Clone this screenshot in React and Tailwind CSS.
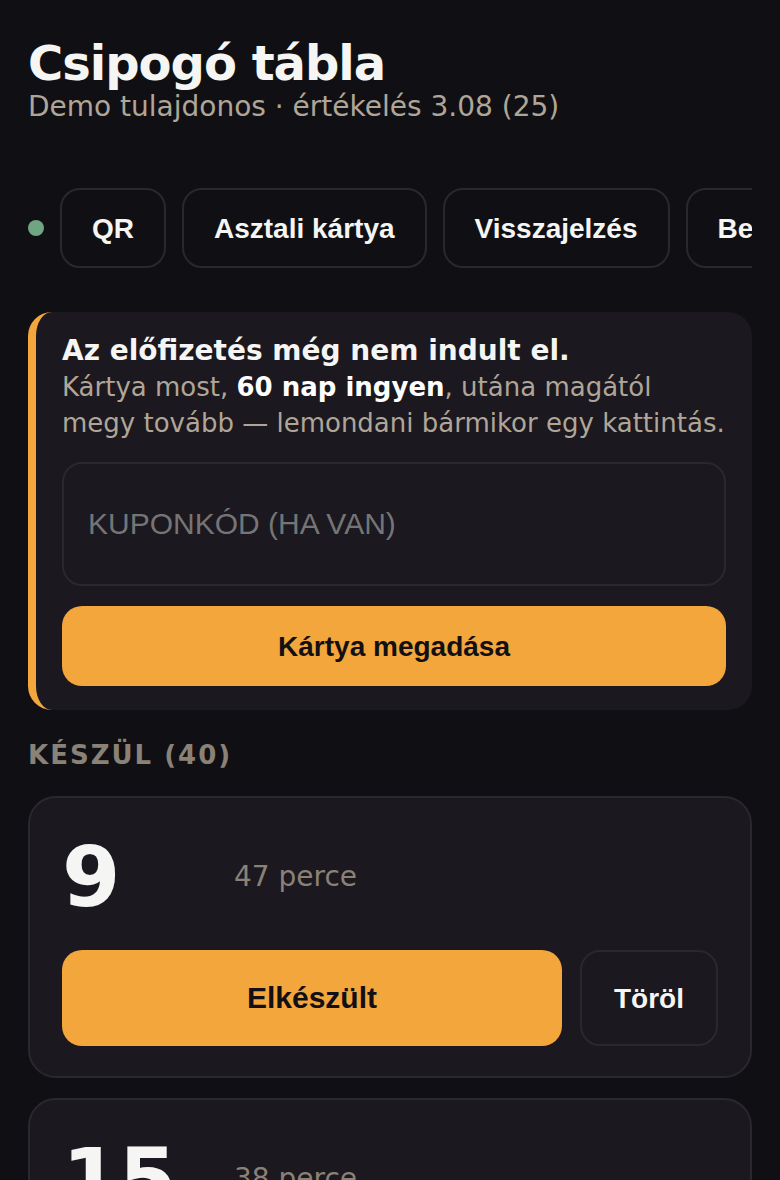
import { useState } from "react";
import clsx from "clsx";

const NAV_ITEMS = ["QR", "Asztali kártya", "Visszajelzés", "Beállítások"];

const ORDERS = [
  { number: 9, minutes: 47 },
  { number: 15, minutes: 38 },
];

const Button = ({ primary = false, large = false, className, children, ...props }) => (
  <button
    type="button"
    className={clsx(
      "shrink-0 rounded-[20px] font-['Liberation_Sans',Arial,sans-serif] leading-[normal] font-bold cursor-pointer",
      large ? "text-[30px]" : "pt-0.5 text-[28px]",
      primary ? "bg-[#f2a63b] text-[#121014]" : "border-2 border-[#2a282e] text-[#f5f5f3]",
      className
    )}
    {...props}
  >
    {children}
  </button>
);

const Header = () => (
  <header>
    <h1 className="text-[48px] leading-[56px] font-bold tracking-[-1px]">Csipogó tábla</h1>
    <p className="text-[28px] leading-8 text-[#b0a698]">
      Demo tulajdonos · értékelés 3.08 (25)
    </p>
  </header>
);

const Toolbar = () => (
  <nav className="mt-[65px] flex items-center gap-4 overflow-hidden">
    <span className="size-4 shrink-0 rounded-full bg-[#6fa580]" />
    {NAV_ITEMS.map((item) => (
      <Button key={item} className="h-20 px-[30px]">
        {item}
      </Button>
    ))}
  </nav>
);

const SubscriptionNotice = () => {
  const [coupon, setCoupon] = useState("");

  return (
    <section className="mt-11 flex flex-col rounded-[24px] border-l-8 border-[#f2a63b] bg-[#1b181f] px-[26px] pt-[21px] pb-6">
      <h2 className="text-[28px] leading-9 font-bold">Az előfizetés még nem indult el.</h2>
      <p className="text-[26px] leading-9 text-[#b0a698]">
        Kártya most, <strong className="text-white">60 nap ingyen</strong>, utána magától megy
        tovább — lemondani bármikor egy kattintás.
      </p>
      <input
        type="text"
        aria-label="Kuponkód"
        placeholder="KUPONKÓD (HA VAN)"
        value={coupon}
        onChange={(e) => setCoupon(e.target.value.toUpperCase())}
        className="mt-[21px] h-[124px] w-full rounded-[20px] border-2 border-[#2a282e] bg-transparent px-6 font-['Liberation_Sans',Arial,sans-serif] text-[30px] placeholder:text-[#757575]"
      />
      <Button primary className="mt-5 h-20">
        Kártya megadása
      </Button>
    </section>
  );
};

const OrderCard = ({ number, minutes }) => (
  <li className="rounded-[28px] border-2 border-[#2a282e] bg-[#1b181f] px-8 pt-8 pb-[30px]">
    <div className="flex items-center">
      <span className="w-[172px] text-[84px] leading-[94px] font-bold tracking-[-2px]">
        {number}
      </span>
      <span className="text-[28px] text-[#8a8177]">{minutes} perce</span>
    </div>
    <div className="mt-[26px] flex gap-[18px]">
      <Button primary large className="h-24 flex-1">
        Elkészült
      </Button>
      <Button className="h-24 px-8">Töröl</Button>
    </div>
  </li>
);

export default function App() {
  return (
    <div className="min-h-screen bg-[#101014] px-7 pt-[35px] pb-7 font-['DejaVu_Sans',sans-serif] text-[#f5f5f3]">
      <Header />
      <Toolbar />
      <SubscriptionNotice />
      <main>
        <h2 className="mt-[29px] text-[26px] leading-8 font-bold tracking-[2px] text-[#8a8177]">
          KÉSZÜL ({40})
        </h2>
        <ul className="mt-[25px] flex flex-col gap-5">
          {ORDERS.map((order) => (
            <OrderCard key={order.number} {...order} />
          ))}
        </ul>
      </main>
    </div>
  );
}
